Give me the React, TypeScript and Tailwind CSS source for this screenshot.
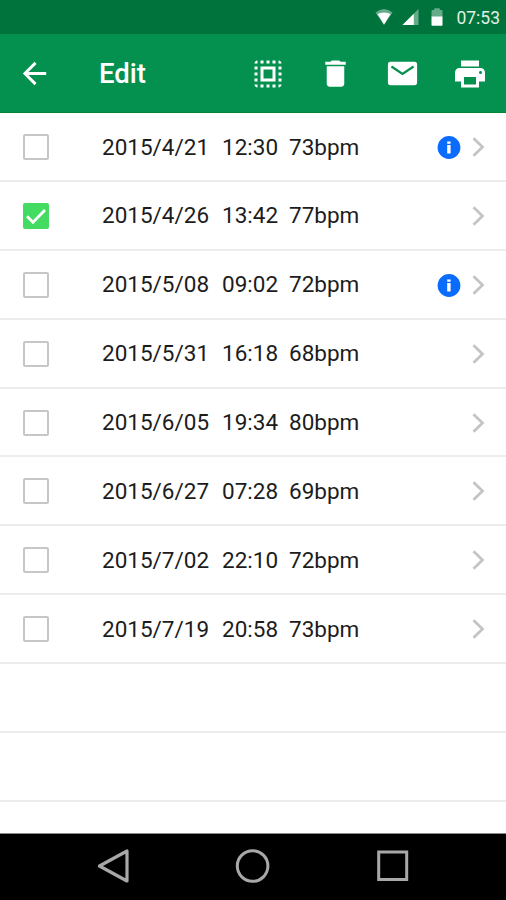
import { MdArrowBack, MdDelete, MdPrint, MdSelectAll } from "react-icons/md";

interface Reading {
	date: string;
	time: string;
	bpm: number;
	checked?: boolean;
	info?: boolean;
}

const readings: Reading[] = [
	{ date: "2015/4/21", time: "12:30", bpm: 73, info: true },
	{ date: "2015/4/26", time: "13:42", bpm: 77, checked: true },
	{ date: "2015/5/08", time: "09:02", bpm: 72, info: true },
	{ date: "2015/5/31", time: "16:18", bpm: 68 },
	{ date: "2015/6/05", time: "19:34", bpm: 80 },
	{ date: "2015/6/27", time: "07:28", bpm: 69 },
	{ date: "2015/7/02", time: "22:10", bpm: 72 },
	{ date: "2015/7/19", time: "20:58", bpm: 73 },
];

const StatusBar = () => (
	<div className="flex h-[34px] shrink-0 items-center justify-end bg-[#00733c] pr-[6px] text-white">
		<svg className="mr-[9px] h-[18px] w-[18px]" viewBox="0 0 18 18">
			<path d="M0.5 4.5Q9-2.5 17.5 4.5L9 17z" fill="#fff" opacity="0.4" />
			<path d="M2.4 6Q9 2.8 15.6 6L9 16.5z" fill="#fff" />
		</svg>
		<svg className="mr-[12px] h-[18px] w-[17px]" viewBox="0 0 17 18">
			<path d="M16.5 1v16H0.5z" fill="#fff" opacity="0.4" />
			<path d="M11.8 5.7V17H0.5z" fill="#fff" />
		</svg>
		<svg className="mr-[13px] h-[20px] w-[12px]" viewBox="0 0 12 20">
			<path d="M0.5 4Q0.5 3 1.5 3H3.2V1.2h5.6V3h1.7Q11.5 3 11.5 4V10H.5z" fill="#fff" opacity="0.4" />
			<path d="M.5 9.5h11V18q0 .8-.8.8H1.3q-.8 0-.8-.8z" fill="#fff" />
		</svg>
		<span className="pt-[3px] text-[17.5px] leading-none text-[#e0f0e4]">07:53</span>
	</div>
);

const MailIcon = () => (
	<svg className="h-[35px] w-[35px]" viewBox="0 0 24 24">
		<rect x="2" y="4" width="20" height="16" rx="1.8" fill="#fff" />
		<path d="M4.4 7.2L12 12.3l7.6-5.1" fill="none" stroke="#04914f" strokeWidth="1.5" />
	</svg>
);

const Toolbar = () => (
	<header className="flex h-[79px] shrink-0 items-center border-b border-[#008437] bg-[#04914f] pt-px pr-[18px] pl-[17px] text-white">
		<MdArrowBack size={35} />
		<h1 className="ml-[47px] pt-px text-[27.5px] font-medium">Edit</h1>
		<div className="ml-auto flex items-center gap-[32px]">
			<MdSelectAll size={36} />
			<MdDelete size={35} />
			<MailIcon />
			<MdPrint size={36} />
		</div>
	</header>
);

const Checkbox = ({ checked }: { checked?: boolean }) => {
	if (!checked) {
		return <span className="h-[26px] w-[26px] rounded-[2px] border-2 border-[#c6c6c8]" />;
	}

	return (
		<span className="h-[26px] w-[26px] rounded-[2px] bg-[#43db61]">
			<svg viewBox="0 0 26 26">
				<path d="M4 13.2l6 6L22 7" fill="none" stroke="#fff" strokeWidth="2.8" />
			</svg>
		</span>
	);
};

const InfoIcon = () => (
	<svg className="mr-[11px] h-[24px] w-[24px]" viewBox="0 0 24 24">
		<circle cx="12" cy="12.5" r="11.4" fill="#0a6cfc" />
		<path d="M10.2 6.5h3.4v2.2h-3.4zM10.2 10.1h3.4v8.4h-3.4z" fill="#fff" />
	</svg>
);

const Row = ({ reading }: { reading: Reading }) => (
	<li className="flex h-[68.9px] items-center border-b-2 border-[#ececec] pt-px pr-[21px] pl-[23px] text-[22.5px] text-[#1c1c1c]">
		<Checkbox checked={reading.checked} />
		<div className="ml-[53px] flex pt-px">
			<span className="w-[120px]">{reading.date}</span>
			<span className="w-[67px]">{reading.time}</span>
			<span>{reading.bpm}bpm</span>
		</div>
		<div className="ml-auto flex items-center">
			{reading.info && <InfoIcon />}
			<svg className="h-[20px] w-[13px]" viewBox="0 0 13 20">
				<path d="M1.5 1.2L10.5 10l-9 8.8" fill="none" stroke="#c4c4c6" strokeWidth="2.8" />
			</svg>
		</div>
	</li>
);

const NavBar = () => (
	<nav className="flex h-[67px] shrink-0 items-center justify-between border-t border-[#8a8a8a] bg-black px-[96px]">
		<svg className="h-[36px] w-[34px]" viewBox="0 0 34 36" fill="none" stroke="#a8a8a8" strokeWidth="3.2" strokeLinejoin="round">
			<path d="M3.5 17L31 2v30z" />
		</svg>
		<svg className="h-[36px] w-[36px]" viewBox="0 0 36 36" fill="none" stroke="#a8a8a8" strokeWidth="3">
			<circle cx="17.6" cy="17" r="15.3" />
		</svg>
		<svg className="h-[36px] w-[34px]" viewBox="0 0 34 36" fill="none" stroke="#a8a8a8" strokeWidth="3">
			<rect x="2.7" y="3" width="28" height="27.5" />
		</svg>
	</nav>
);

export default function App() {
	return (
		<div className="flex h-[900px] w-[506px] flex-col overflow-hidden bg-white font-['Roboto',sans-serif]">
			<StatusBar />
			<Toolbar />
			<ul className="min-h-0 flex-1 overflow-hidden">
				{readings.map((reading) => (
					<Row key={reading.date} reading={reading} />
				))}
				{/* empty lines below the last reading */}
				<li className="h-[68.9px] border-b-2 border-[#ececec]" />
				<li className="h-[68.9px] border-b-2 border-[#ececec]" />
			</ul>
			<NavBar />
		</div>
	);
}
